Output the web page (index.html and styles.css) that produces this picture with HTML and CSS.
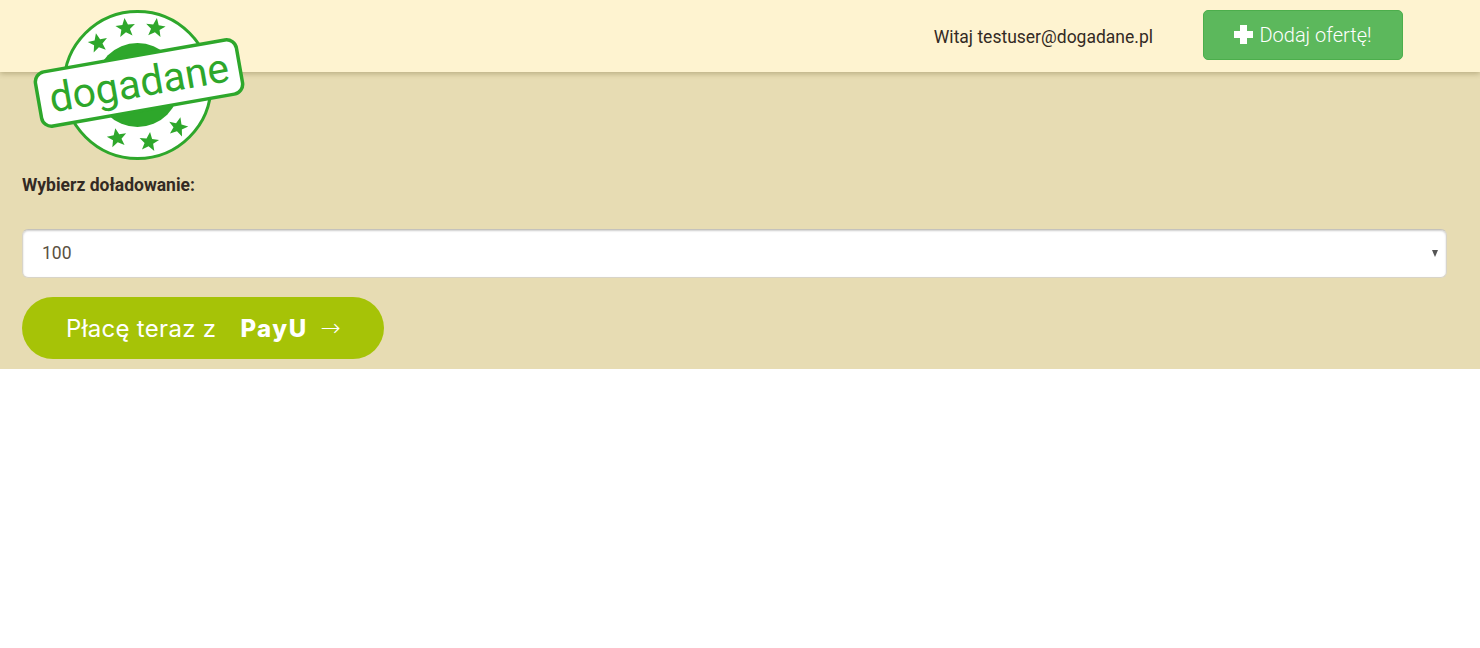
FILE: index.html
```html
<!DOCTYPE html>
<html lang="pl">
<head>
    <meta charset="UTF-8">
    <title>dogadane</title>
    <link rel="stylesheet" href="styles.css">
</head>
<body>
    <div class="header">
        <div class="welcome">Witaj testuser@dogadane.pl</div>
        <a class="add-btn" href="#">
            <svg class="plus" viewBox="0 0 19 19"><path d="M6 0h7v6h6v7h-6v6H6v-6H0V6h6z"/></svg>
            Dodaj ofertę!
        </a>
    </div>
    <svg class="logo" viewBox="33 9 212 152">
        <defs>
            <path id="star" d="M0-10 2.800-3.200 9.800-3 4.300 1.400 6.200 8.300 0 4.300-6.200 8.300-4.300 1.400-9.800-3-2.800-3.200z"/>
        </defs>
        <circle cx="137.500" cy="85" r="73.500" fill="#fff" stroke="#2ea72b" stroke-width="3"/>
        <circle cx="137.500" cy="85" r="42" fill="#2ea72b"/>
        <g fill="#2ea72b">
            <use href="#star" transform="translate(98 43) rotate(-12)"/>
            <use href="#star" transform="translate(125.500 28) rotate(-6)"/>
            <use href="#star" transform="translate(155.500 28) rotate(8)"/>
            <use href="#star" transform="translate(117 138) rotate(-10)"/>
            <use href="#star" transform="translate(149 142) rotate(6)"/>
            <use href="#star" transform="translate(178 127) rotate(14)"/>
        </g>
        <g transform="rotate(-10 139 83)">
            <rect x="37" y="55.500" width="204" height="55" rx="10" fill="#fff" stroke="#2ea72b" stroke-width="3.500"/>
            <text class="logo-text" x="139" y="97" text-anchor="middle">dogadane</text>
        </g>
    </svg>
    <div class="content">
        <label class="pick-label" for="amount">Wybierz doładowanie:</label>
        <div class="pick-wrap">
            <select class="pick" id="amount">
                <option>100</option>
                <option>200</option>
                <option>500</option>
            </select>
            <span class="pick-arrow"></span>
        </div>
        <a class="payu" href="#">Płacę teraz z <b>PayU</b><span class="arrow">→</span></a>
    </div>
</body>
</html>
```
FILE: styles.css
```css
body {
    margin: 0;
    padding: 0;
    background: #fff;
    font-family: Roboto, "Liberation Sans", sans-serif;
    color: #332a24;
}
.header {
    position: relative;
    height: 72px;
    padding-right: 77px;
    display: flex;
    justify-content: flex-end;
    align-items: center;
    gap: 50px;
    background: #fef3d0;
    box-shadow: 0 2px 5px rgba(90, 75, 30, 0.3);
}
.welcome {
    margin-top: 1px;
    font-size: 17.500px;
    line-height: 72px;
}
.add-btn {
    box-sizing: border-box;
    width: 200px;
    height: 50px;
    margin-bottom: 2px;
    display: flex;
    justify-content: center;
    align-items: center;
    gap: 6px;
    background: #5cb85c;
    border: 1px solid #4cae4c;
    border-radius: 5px;
    color: #fff;
    font-size: 20px;
    font-weight: 300;
    text-decoration: none;
}
.plus {
    width: 19px;
    height: 19px;
    margin-bottom: 2px;
    fill: #fff;
}
.logo {
    position: absolute;
    left: 33px;
    top: 9px;
    width: 212px;
    height: 152px;
}
.logo-text {
    font-family: Roboto, sans-serif;
    font-size: 41px;
    font-weight: 400;
    fill: #2ea72b;
}
.content {
    box-sizing: border-box;
    height: 297px;
    padding: 103px 33px 0 22px;
    display: flex;
    flex-direction: column;
    align-items: flex-start;
    background: #e7dcb3;
}
.pick-label {
    font-size: 17.500px;
    font-weight: 700;
    line-height: 20px;
}
.pick-wrap {
    position: relative;
    width: 100%;
    margin-top: 34px;
}
.pick {
    display: block;
    box-sizing: border-box;
    width: 100%;
    height: 49px;
    padding: 0 19px 2px;
    appearance: none;
    background-color: #fff;
    border: 1px solid #d8d4c8;
    border-top-color: #c4c2bc;
    border-radius: 6px;
    box-shadow: inset 0 1px 2px rgba(0, 0, 0, 0.2);
    color: #5a5040;
    font-family: Roboto, sans-serif;
    font-size: 17.500px;
}
.pick-arrow {
    position: absolute;
    right: 9px;
    top: 21px;
    border-top: 7px solid #555;
    border-left: 3.500px solid transparent;
    border-right: 3.500px solid transparent;
}
.payu {
    box-sizing: border-box;
    width: 362px;
    height: 62px;
    margin-top: 19px;
    padding-left: 44px;
    display: flex;
    align-items: center;
    background: #a6c307;
    border-radius: 31px;
    color: #fff;
    font-family: Inter, sans-serif;
    font-size: 24px;
    font-weight: 400;
    letter-spacing: 0.300px;
    white-space: pre;
    text-decoration: none;
}
.payu b {
    margin-left: 17px;
    font-weight: 800;
    letter-spacing: 1.500px;
}
.arrow {
    margin-left: 13px;
    font-family: "DejaVu Sans", sans-serif;
    font-size: 24px;
    font-weight: 300;
}
```
